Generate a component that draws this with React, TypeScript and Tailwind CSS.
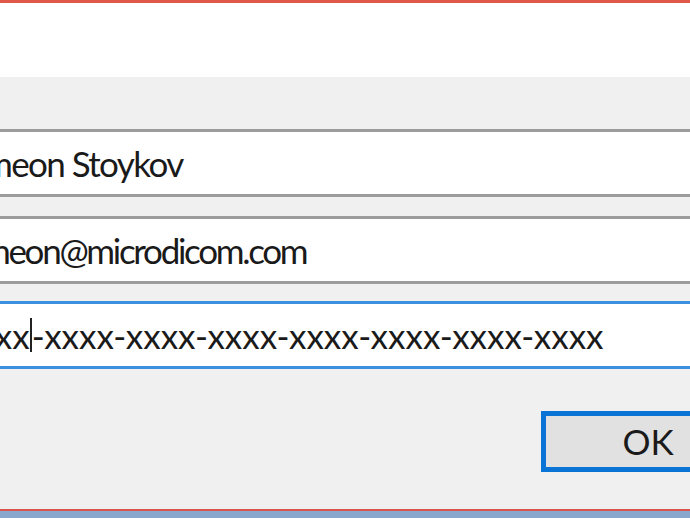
export default function App() {
  const font = { fontFamily: 'Lato, "Noto Sans", sans-serif' };

  return (
    <div className="w-[690px] h-[518px] overflow-hidden flex flex-col bg-[#f0f0f0]" style={font}>
      {/* window frame top */}
      <div className="h-[3px] bg-[#e0584a]" />
      <div className="h-[74px] bg-white" />

      <div className="flex-1 flex flex-col pt-[52px] bg-[#f0f0f0]">
        {/* name */}
        <div className="h-[68px] border-y-[3px] border-[#9c9c9c] bg-white flex items-center overflow-hidden">
          <span className="-ml-[40px] text-[35px] tracking-[-1.6px] text-[#1a1a1a] whitespace-nowrap">Simeon Stoykov</span>
        </div>

        {/* email */}
        <div className="mt-[19px] h-[68px] border-y-[3px] border-[#9c9c9c] bg-white flex items-center overflow-hidden">
          <span className="-ml-[37px] text-[35px] tracking-[-2.3px] text-[#1a1a1a] whitespace-nowrap">simeon@microdicom.com</span>
        </div>

        {/* license key, focused */}
        <div className="mt-[17px] h-[68px] border-y-[3px] border-[#3d8fe0] bg-white flex items-center overflow-hidden">
          <span className="-ml-[40px] text-[35px] text-[#1a1a1a] whitespace-nowrap flex items-center">
            xxxx
            <span className="inline-block w-[2px] h-[34px] bg-[#222]" />
            -xxxx-xxxx-xxxx-xxxx-xxxx-xxxx-xxxx
          </span>
        </div>

        {/* buttons */}
        <div className="mt-[42px] flex justify-start pl-[541px]">
          <div className="shrink-0 w-[214px] h-[61px] border-[5px] border-[#0a74d6] bg-[#e1e1e1] flex items-center justify-center">
            <span className="text-[35px] text-[#1a1a1a]">OK</span>
          </div>
        </div>

        <div className="flex-1" />
        <div className="h-[2px] bg-[#d9544a]" />
        <div className="h-[7px] bg-[#89a6cc]" />
      </div>
    </div>
  );
}
